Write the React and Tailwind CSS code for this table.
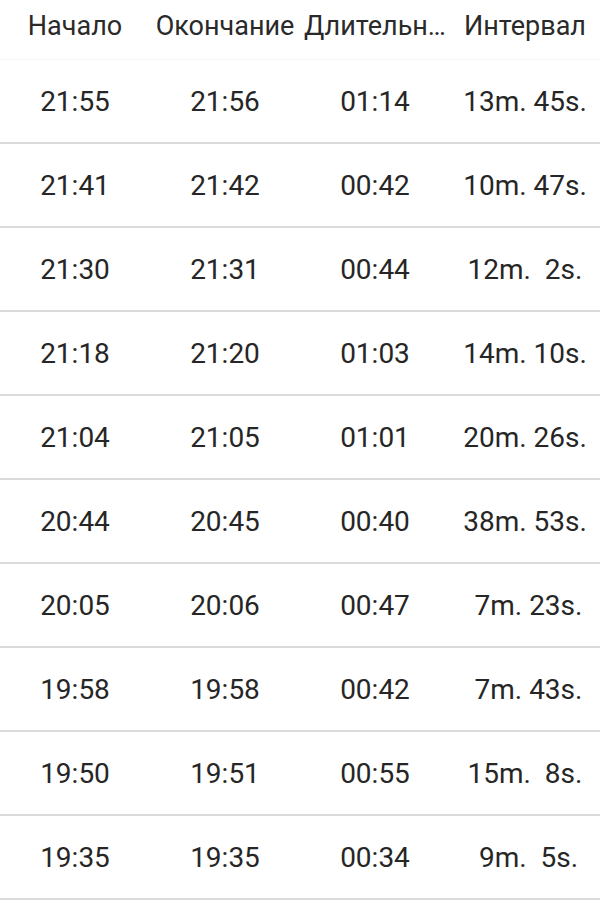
import React from 'react';

const ROWS = [
  ['21:55', '21:56', '01:14', '13m. 45s.'],
  ['21:41', '21:42', '00:42', '10m. 47s.'],
  ['21:30', '21:31', '00:44', '12m.  2s.'],
  ['21:18', '21:20', '01:03', '14m. 10s.'],
  ['21:04', '21:05', '01:01', '20m. 26s.'],
  ['20:44', '20:45', '00:40', '38m. 53s.'],
  ['20:05', '20:06', '00:47', ' 7m. 23s.'],
  ['19:58', '19:58', '00:42', ' 7m. 43s.'],
  ['19:50', '19:51', '00:55', '15m.  8s.'],
  ['19:35', '19:35', '00:34', ' 9m.  5s.'],
];

const HEADERS = ['Начало', 'Окончание', 'Длительн…', 'Интервал'];

export default function App() {
  return (
    <div className="w-[600px] h-[901px] bg-white overflow-hidden font-['Roboto',sans-serif] text-[#262626]">
      {/* Header */}
      <div className="grid grid-cols-4 h-[60px] items-center pb-[6px] border-b border-[#f4f4f4] text-[27px] text-[#2a2a2a]">
        {HEADERS.map((h) => (
          <div key={h} className="text-center whitespace-nowrap">{h}</div>
        ))}
      </div>

      {/* Rows */}
      {ROWS.map((row, i) => (
        <div key={i} className="grid grid-cols-4 h-[84px] items-center pt-[2px] border-b-2 border-[#dadada] text-[28px] leading-none">
          {row.map((cell, j) => (
            <div key={j} className="text-center whitespace-pre">{cell}</div>
          ))}
        </div>
      ))}
    </div>
  );
}
